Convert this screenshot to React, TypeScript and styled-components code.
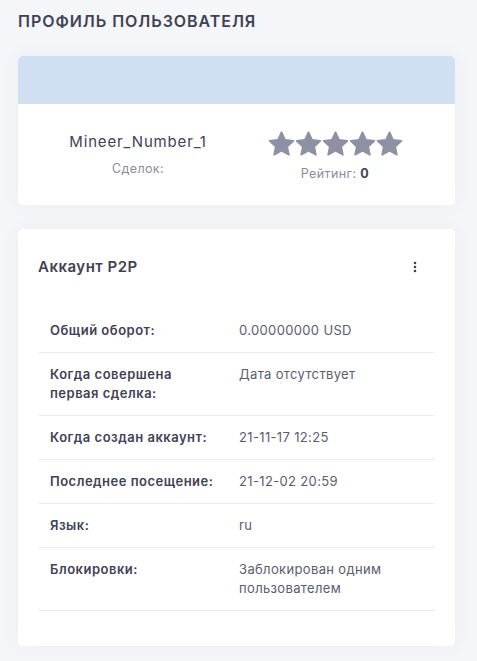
import React from "react";
import styled, { createGlobalStyle } from "styled-components";

const GlobalStyle = createGlobalStyle`
  * { box-sizing: border-box; }
  html, body {
    margin: 0;
    padding: 0;
    background: #f5f6f9;
    font-family: Inter, "Open Sans", Arial, sans-serif;
    color: #3f4254;
  }
`;

const Page = styled.div`
  padding: 9px 22px 16px 18px;
  display: flex;
  flex-direction: column;
`;

const PageTitle = styled.h1`
  margin: 0 0 23px;
  font-size: 16px;
  line-height: 24px;
  font-weight: 600;
  letter-spacing: 0.95px;
  color: #3f4254;
  text-transform: uppercase;
`;

const Card = styled.div`
  background: #fff;
  border-radius: 5px;
  box-shadow: 0 0 20px rgba(82, 63, 105, 0.05);
  overflow: hidden;
  margin-bottom: 24px;
`;

const Banner = styled.div`
  height: 48px;
  background: #d0dff2;
`;

const ProfileRow = styled.div`
  display: grid;
  grid-template-columns: 240px 1fr;
  padding: 24px 0 24px 0;
  height: 101px;
`;

const ProfileCol = styled.div`
  display: flex;
  flex-direction: column;
  align-items: center;
`;

const UserName = styled.div`
  font-size: 15px;
  line-height: 24px;
  letter-spacing: 0.85px;
  color: #3f4254;
  margin-top: 2px;
`;

const Muted = styled.div`
  font-size: 12.5px;
  line-height: 18px;
  letter-spacing: 0.4px;
  color: #8b8d98;
  margin-top: 6px;
`;

const Stars = styled.div`
  display: flex;
  margin-left: -43px;
  margin-top: 3px;
`;

const Rating = styled(Muted)`
  margin-left: -43px;
  margin-top: 9px;
  b {
    color: #3f4254;
    font-weight: 700;
  }
`;

const CardHeader = styled.div`
  display: flex;
  align-items: flex-start;
  justify-content: space-between;
  padding: 27px 20px 0 20px;
  height: 80px;
`;

const CardTitle = styled.h3`
  margin: 0;
  font-size: 15px;
  line-height: 22px;
  font-weight: 600;
  letter-spacing: 0.5px;
  color: #3f4254;
`;

const MenuButton = styled.button`
  border: 0;
  background: none;
  height: 22px;
  padding: 0 18px 0 0;
  cursor: pointer;
  display: flex;
  align-items: center;
`;

const InfoTable = styled.div`
  margin: 0 20px 35px 20px;
`;

const InfoRow = styled.div`
  display: grid;
  grid-template-columns: 189px 1fr;
  border-bottom: 1px solid #ebedf3;
  padding: 12px 0 12px 0;
`;

const Cell = styled.div<{ $label?: boolean }>`
  padding: 0 12px;
  font-size: 13px;
  line-height: 19px;
  font-weight: ${(p) => (p.$label ? 600 : 400)};
  letter-spacing: ${(p) => (p.$label ? "0.5px" : "0.35px")};
  color: ${(p) => (p.$label ? "#3f4254" : "#595d6e")};
`;

const Star = () => (
  <svg width="27" height="25" viewBox="0 0 27 25">
    <path
      d="M13.5 1.2l3.6 7.6 8.3 1-6.1 5.8 1.6 8.3-7.4-4.1-7.4 4.1 1.6-8.3L1.6 9.8l8.3-1z"
      fill="#8e91a3"
      stroke="#8e91a3"
      strokeWidth="1.6"
      strokeLinejoin="round"
    />
  </svg>
);

const Kebab = () => (
  <svg width="4" height="12" viewBox="0 0 4 12">
    <circle cx="2" cy="2" r="1.3" fill="#3f4254" />
    <circle cx="2" cy="6" r="1.3" fill="#3f4254" />
    <circle cx="2" cy="10" r="1.3" fill="#3f4254" />
  </svg>
);

const rows: [string, string][] = [
  ["Общий оборот:", "0.00000000 USD"],
  ["Когда совершена первая сделка:", "Дата отсутствует"],
  ["Когда создан аккаунт:", "21-11-17 12:25"],
  ["Последнее посещение:", "21-12-02 20:59"],
  ["Язык:", "ru"],
  ["Блокировки:", "Заблокирован одним пользователем"],
];

export default function App() {
  return (
    <>
      <GlobalStyle />
      <Page>
        <PageTitle>Профиль пользователя</PageTitle>
        <Card>
          <Banner />
          <ProfileRow>
            <ProfileCol>
              <UserName>Mineer_Number_1</UserName>
              <Muted>Сделок:</Muted>
            </ProfileCol>
            <ProfileCol>
              <Stars>
                {[0, 1, 2, 3, 4].map((i) => (
                  <Star key={i} />
                ))}
              </Stars>
              <Rating>
                Рейтинг: <b>0</b>
              </Rating>
            </ProfileCol>
          </ProfileRow>
        </Card>
        <Card>
          <CardHeader>
            <CardTitle>Аккаунт P2P</CardTitle>
            <MenuButton aria-label="menu">
              <Kebab />
            </MenuButton>
          </CardHeader>
          <InfoTable>
            {rows.map(([k, v]) => (
              <InfoRow key={k}>
                <Cell $label>{k}</Cell>
                <Cell>{v}</Cell>
              </InfoRow>
            ))}
          </InfoTable>
        </Card>
      </Page>
    </>
  );
}
